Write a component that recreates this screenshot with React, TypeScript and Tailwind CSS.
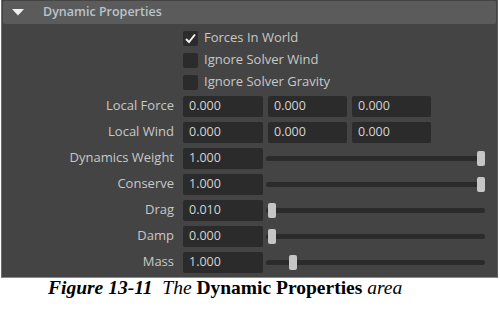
import React from "react";

const font = { fontFamily: '"Open Sans", "DejaVu Sans", sans-serif' };

function Check({ checked, label }: { checked?: boolean; label: string }) {
  return (
    <div className="flex h-[22px] items-center">
      <div className="w-[172px]" />
      <div className="ml-[9px] flex items-center">
        <div className="flex h-[15px] w-[15px] items-center justify-center rounded-[2px] bg-[#2b2b2b]">
          {checked && (
            <svg width="13" height="13" viewBox="0 0 13 13">
              <path d="M2 7 L5 10 L11 2.5" fill="none" stroke="#f2f2f2" strokeWidth="2" />
            </svg>
          )}
        </div>
        <span className="ml-[6px] text-[13px] text-[#c8c8c8]">{label}</span>
      </div>
    </div>
  );
}

function Field({ value, w }: { value: string; w: string }) {
  return (
    <div className={`flex h-[21px] items-center rounded-[2px] bg-[#2b2b2b] pl-[6px] text-[12.5px] text-[#d4d4d4] ${w}`}>
      {value}
    </div>
  );
}

function Label({ text }: { text: string }) {
  return <div className="w-[172px] text-right text-[13px] text-[#c8c8c8]">{text}</div>;
}

function TripleRow({ label, values }: { label: string; values: string[] }) {
  return (
    <div className="flex h-[26px] items-center">
      <Label text={label} />
      <div className="ml-[9px] flex gap-[5px]">
        <Field value={values[0]} w="w-[80px]" />
        <Field value={values[1]} w="w-[79px]" />
        <Field value={values[2]} w="w-[79px]" />
      </div>
    </div>
  );
}

function SliderRow({ label, value, frac }: { label: string; value: string; frac: number }) {
  return (
    <div className="flex h-[26px] items-center">
      <Label text={label} />
      <div className="ml-[9px] flex items-center">
        <Field value={value} w="w-[80px]" />
        <div className="relative ml-[3px] h-[15px] w-[219px]">
          <div className="absolute left-0 right-0 top-[5px] h-[5px] rounded-full bg-[#2b2b2b]" />
          <div
            className="absolute top-0 h-[15px] w-[8px] rounded-[2px] bg-[#c6c6c6]"
            style={{ left: `${2 + frac * 209}px` }}
          />
        </div>
      </div>
    </div>
  );
}

export default function App() {
  return (
    <div className="h-[319px] w-[500px] bg-white" style={font}>
      <div className="ml-[1px] h-[278px] w-[497px] border-b border-l border-r border-b-[#8a8a8a] border-l-[#6e6e6e] border-r-[#5a5a5a] bg-[#444444]">
        <div className="mx-[1px] flex h-[24px] items-center rounded-[2px] border-t border-[#444444] bg-[#5b5b5b]">
          <svg width="12" height="7" viewBox="0 0 12 7" className="ml-[9px]">
            <path d="M0 0 L12 0 L6 6.5 Z" fill="#f0f0f0" />
          </svg>
          <span className="ml-[19px] text-[12.5px] font-semibold text-[#b9c3cb]">Dynamic Properties</span>
        </div>
        <div className="pt-[3px]">
          <Check checked label="Forces In World" />
          <Check label="Ignore Solver Wind" />
          <Check label="Ignore Solver Gravity" />
          <TripleRow label="Local Force" values={["0.000", "0.000", "0.000"]} />
          <TripleRow label="Local Wind" values={["0.000", "0.000", "0.000"]} />
          <SliderRow label="Dynamics Weight" value="1.000" frac={1} />
          <SliderRow label="Conserve" value="1.000" frac={1} />
          <SliderRow label="Drag" value="0.010" frac={0} />
          <SliderRow label="Damp" value="0.000" frac={0} />
          <SliderRow label="Mass" value="1.000" frac={0.1} />
        </div>
      </div>
      <div
        className="pl-[48px] text-left text-[19.5px] leading-[20px] text-black"
        style={{ fontFamily: '"Liberation Serif", "Times New Roman", serif' }}
      >
        <span className="font-bold italic">Figure 13-11</span>
        <span className="italic">{"\u00a0\u00a0"}The </span>
        <span className="font-bold">Dynamic Properties</span>
        <span className="italic"> area</span>
      </div>
    </div>
  );
}
